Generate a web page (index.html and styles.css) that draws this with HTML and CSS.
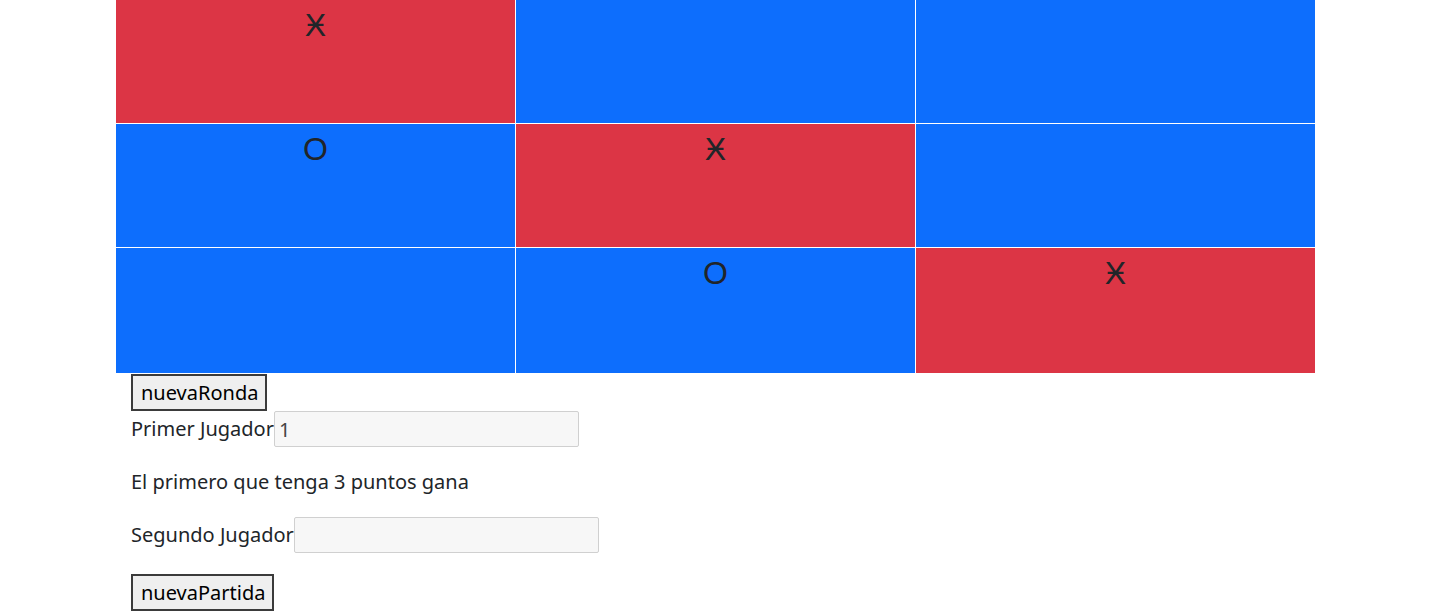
FILE: index.html
```html
<!DOCTYPE html>
<html lang="es">
<head>
<meta charset="utf-8">
<title>Tres en raya</title>
<link rel="stylesheet" href="styles.css">
</head>
<body>
<div class="board">
  <div class="cell red">Ӿ</div>
  <div class="cell blue"></div>
  <div class="cell blue"></div>
  <div class="cell blue">O</div>
  <div class="cell red">Ӿ</div>
  <div class="cell blue"></div>
  <div class="cell blue"></div>
  <div class="cell blue">O</div>
  <div class="cell red">Ӿ</div>
</div>
<div class="controls">
  <button class="btn btn-ronda">nuevaRonda</button>
  <div class="row row-first">
    <label class="lbl">Primer Jugador</label><input class="field" type="text" value="1">
  </div>
  <p class="info">El primero que tenga 3 puntos gana</p>
  <div class="row">
    <label class="lbl">Segundo Jugador</label><input class="field" type="text" value="">
  </div>
  <button class="btn btn-partida">nuevaPartida</button>
</div>
</body>
</html>
```
FILE: styles.css
```css
html, body {
  margin: 0;
  padding: 0;
  background: #fff;
}
body {
  font-family: "Noto Sans", "Open Sans", sans-serif;
  font-size: 20px;
  line-height: 1.5;
  color: #212529;
}
.board {
  margin-left: 116px;
  width: 1199px;
  display: grid;
  grid-template-columns: repeat(3, 399px);
  grid-template-rows: 123px 123px 125px;
  gap: 1px;
  background: #fff;
}
.cell {
  font-family: "Liberation Sans", Arial, sans-serif;
  font-size: 32px;
  line-height: 51px;
  text-align: center;
  color: #212529;
}
.red { background: #dc3545; }
.blue { background: #0d6efd; }
.controls {
  padding-left: 131px;
  display: flex;
  flex-direction: column;
  align-items: flex-start;
}
.btn {
  font-family: "Noto Sans", "Open Sans", sans-serif;
  font-size: 20px;
  line-height: 27px;
  color: #000;
  background: #efefef;
  border: 2px solid #3b3b3b;
  border-radius: 0;
  padding: 3px 7px 3px 8px;
  margin: 0;
  height: 37px;
}
.btn-ronda { margin-top: 1px; }
.row {
  display: flex;
  align-items: center;
}
.row-first { height: 36px; }
.lbl { color: #212529; }
.field {
  box-sizing: border-box;
  width: 305px;
  height: 36px;
  border: 1px solid #d0d0d0;
  border-radius: 2px;
  background: #f7f7f7;
  font-family: "Noto Sans", "Open Sans", sans-serif;
  font-size: 20px;
  color: #444;
  padding: 0 4px;
  margin: 0;
}
.info {
  margin: 20px 0;
  line-height: 30px;
}
.btn-partida { margin-top: 21px; }
```
